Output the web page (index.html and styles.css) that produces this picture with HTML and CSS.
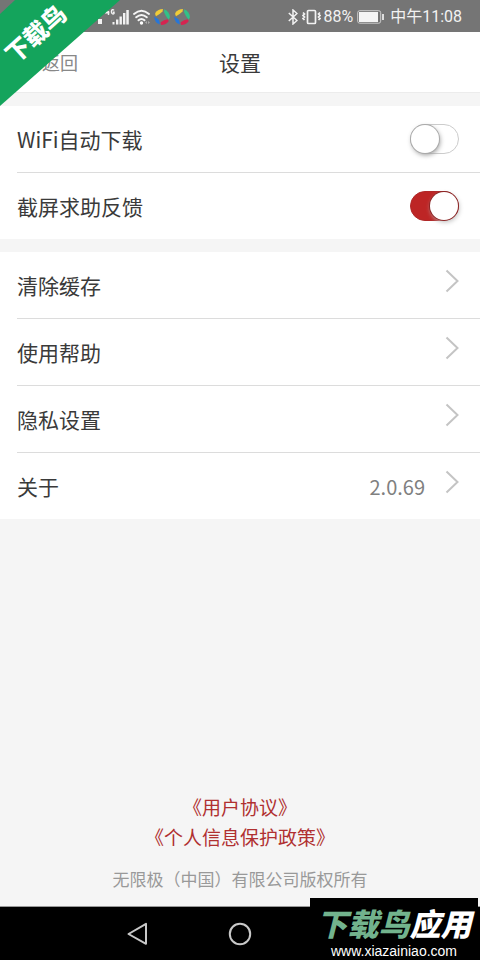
FILE: index.html
```html
<!DOCTYPE html>
<html lang="zh-CN">
<head>
<meta charset="utf-8">
<meta name="viewport" content="width=device-width, initial-scale=1">
<title>设置</title>
<link rel="stylesheet" href="styles.css">
</head>
<body>
<div class="status">
  <div class="status-group status-left">
    <svg width="31" height="18" viewBox="0 0 31 18" aria-hidden="true">
      <g fill="none" stroke="#f2f2f2" stroke-width="1.4">
        <path d="M10 1L8 4.800h3.400M10.500 3v4M16 2.400c-1-1.400-2.600-.8-2.600 1.300s1.600 2.800 2.600 1.800V4.300h-1.200"/>
      </g>
      <g fill="#f2f2f2"><path d="M0 11h4v5H0zM14.500 14h2v2.500h-2zM18 11.500h2.400v5H18zM21.500 8.500h2.400v8h-2.400zM25 5h2.400v11.500H25zM28.300 2h2.500v14.500h-2.500z"/></g>
    </svg>
    <svg width="17" height="16" viewBox="0 0 17 16" aria-hidden="true">
      <g fill="none" stroke="#f5f5f5" stroke-width="1.900" stroke-linecap="round"><path d="M1 5q7.500-6.500 15 0M3.200 8.300q5.300-4.800 10.600 0M5.500 11.300q3-2.800 6 0"/></g>
      <circle cx="8.500" cy="14" r="1.700" fill="#fff"/><path d="M12 13.500l2-1.500v3zM17 13.500L15 12v3z" fill="#aaa"/>
    </svg>
    <svg width="16" height="16" viewBox="0 0 16 16" aria-hidden="true">
      <path d="M1.200 4Q4 .2 9 .1L8.500 2.500Q6 5 2 7.200 1 6 1.200 4z" fill="#f0cc38"/>
      <path d="M10 .3Q15.500 2 15.900 8.500L14.500 10.500Q11.500 7 10.200 3.500z" fill="#32c088"/>
      <path d="M14.800 12Q12 16 7 15.900L6.500 13.500Q10 10.800 13.500 10.300z" fill="#d52450"/>
      <path d="M.1 7.500Q4 9 5.500 12.500l.3 3.100Q.5 13.500.1 7.500z" fill="#2676d9"/>
    </svg>
    <svg width="16" height="16" viewBox="0 0 16 16" aria-hidden="true">
      <path d="M1.200 4Q4 .2 9 .1L8.500 2.500Q6 5 2 7.200 1 6 1.200 4z" fill="#f0cc38"/>
      <path d="M10 .3Q15.500 2 15.900 8.500L14.500 10.500Q11.500 7 10.200 3.500z" fill="#32c088"/>
      <path d="M14.800 12Q12 16 7 15.900L6.500 13.500Q10 10.800 13.500 10.300z" fill="#d52450"/>
      <path d="M.1 7.500Q4 9 5.500 12.500l.3 3.100Q.5 13.500.1 7.500z" fill="#2676d9"/>
    </svg>
  </div>
  <div class="status-group status-right">
    <svg width="10" height="16" viewBox="0 0 10 16" aria-hidden="true"><path d="M.8 4L9 11.500 5 15V1l4 3.500L.8 12" fill="none" stroke="#f2f2f2" stroke-width="1.500"/></svg>
    <svg width="19" height="16" viewBox="0 0 19 16" aria-hidden="true"><g fill="none" stroke="#f2f2f2"><rect x="5.500" y="1.500" width="8" height="13" rx="1" stroke-width="1.700"/><path d="M1 3.500l1.500 1.500L1 6.500 2.500 8 1 9.500 2.500 11M18 3.500L16.500 5 18 6.500 16.500 8 18 9.500 16.500 11" stroke-width="1.700"/></g></svg>
    <span>88%</span>
    <svg class="battery" width="27" height="14" viewBox="0 0 27 14" aria-hidden="true"><rect x=".7" y=".7" width="23" height="12.500" rx="2" fill="none" stroke="#ccc"/><rect x="2" y="2" width="19" height="10" fill="#f5f5f5"/><path d="M25 4h2v6h-2z" fill="#ddd"/></svg>
    <span>中午11:08</span>
  </div>
</div>
<header class="header">
  <a class="back" href="#">返回</a>
  <h1 class="title">设置</h1>
</header>
<main class="main">
  <section class="group">
    <div class="row"><label for="wifi">WiFi自动下载</label><input class="switch" type="checkbox" id="wifi"></div>
    <div class="row"><label for="shot">截屏求助反馈</label><input class="switch" type="checkbox" id="shot" checked></div>
  </section>
  <section class="group">
    <a class="row" href="#"><span>清除缓存</span><svg class="chevron" width="14" height="24" viewBox="0 0 14 24" aria-hidden="true"><path d="M1.500 1.500L12.500 12 1.500 22.500"/></svg></a>
    <a class="row" href="#"><span>使用帮助</span><svg class="chevron" width="14" height="24" viewBox="0 0 14 24" aria-hidden="true"><path d="M1.500 1.500L12.500 12 1.500 22.500"/></svg></a>
    <a class="row" href="#"><span>隐私设置</span><svg class="chevron" width="14" height="24" viewBox="0 0 14 24" aria-hidden="true"><path d="M1.500 1.500L12.500 12 1.500 22.500"/></svg></a>
    <a class="row" href="#"><span>关于</span><span class="version">2.0.69</span><svg class="chevron" width="14" height="24" viewBox="0 0 14 24" aria-hidden="true"><path d="M1.500 1.500L12.500 12 1.500 22.500"/></svg></a>
  </section>
  <footer class="legal">
    <a href="#">《用户协议》</a>
    <a href="#">《个人信息保护政策》</a>
    <p>无限极（中国）有限公司版权所有</p>
  </footer>
</main>
<nav class="nav">
  <button class="key" type="button" aria-label="后退"><svg width="24" height="24" viewBox="0 0 24 24"><path d="M20 1.800v20L2.500 12z"/></svg></button>
  <button class="key" type="button" aria-label="主页"><svg width="24" height="24" viewBox="0 0 24 24"><circle cx="12" cy="12" r="10.200"/></svg></button>
  <div class="mark">
    <div class="mark-name"><span class="mark-green">下载鸟</span>应用</div>
    <div class="mark-url">www.xiazainiao.com</div>
  </div>
</nav>
<div class="ribbon"><span class="ribbon-text">下载鸟</span></div>
</body>
</html>
```
FILE: styles.css
```css
* { box-sizing: border-box; }

body {
  margin: 0;
  min-height: 100vh;
  display: flex;
  flex-direction: column;
  position: relative;
  background: #f5f5f5;
  color: #3a3a3a;
  font-family: "Noto Sans CJK SC", sans-serif;
}

a { color: inherit; text-decoration: none; }
svg { display: block; flex: none; }

.status {
  height: 32px;
  padding: 1px 18px 0 98px;
  display: flex;
  align-items: center;
  justify-content: space-between;
  background: #757575;
  color: #f2f2f2;
  font: 16px/31px Roboto, "Noto Sans CJK SC", sans-serif;
}
.status-group { display: flex; align-items: center; }
.status-left { gap: 4px; }
.status-right { gap: 4px; }
.status-right svg + svg { margin-right: -2px; }
.battery { margin-right: 2px; }

.header {
  height: 61px;
  padding: 0 42px;
  display: grid;
  grid-template-columns: 1fr auto 1fr;
  align-items: center;
  background: #fff;
  border-bottom: 1px solid #ececec;
}
.back { font-size: 18px; color: #888; }
.title { margin: 0; font-size: 21px; font-weight: 400; }

.main { flex: 1; display: flex; flex-direction: column; padding-top: 13px; }
.group { background: #fff; padding-left: 17px; margin-bottom: 13px; }
.row {
  height: 67px;
  padding-right: 21px;
  display: flex;
  align-items: center;
  justify-content: space-between;
  border-bottom: 1px solid #dcdcdc;
  font-size: 21px;
}
.row:last-child { height: 66px; border-bottom: 0; }
.version { margin-left: auto; margin-right: 20px; font-size: 20px; color: #808080; }
.chevron { margin-bottom: 8px; fill: none; stroke: #c4c4c4; stroke-width: 2; }

.switch {
  appearance: none;
  width: 49px;
  height: 30px;
  margin: 0;
  border: 1px solid #ccc;
  border-radius: 15px;
  background: #fff;
  display: flex;
}
.switch::before {
  content: "";
  width: 28px;
  height: 28px;
  border-radius: 50%;
  background: #fff;
  box-shadow: 0 0 0 1px #aaa, 1px 2px 5px #999;
}
.switch:checked { background: #bd2525; border-color: #b02828; justify-content: flex-end; }
.switch:checked::before { box-shadow: 0 0 0 1px #8b2525, 1px 2px 5px #bbb; }

.legal {
  margin-top: auto;
  padding-bottom: 12px;
  display: flex;
  flex-direction: column;
  align-items: center;
  color: #b03030;
  font-size: 19px;
  line-height: 30px;
}
.legal p { margin: 12px 0 0; font-size: 17px; color: #999; }

.nav {
  position: relative;
  height: 54px;
  display: flex;
  align-items: center;
  justify-content: center;
  gap: 78px;
  padding-right: 102px;
  background: #000;
  border-top: 1px solid #999;
}
.key { padding: 0; border: 0; background: none; fill: none; stroke: #c8c8c8; stroke-width: 2; stroke-linejoin: round; }

.mark {
  position: absolute;
  right: 2px;
  bottom: 0;
  width: 168px;
  height: 62px;
  padding-top: 6px;
  background: #000;
  color: #fff;
  text-align: center;
}
.mark-name { font-size: 31px; line-height: 38px; font-weight: 900; font-style: italic; }
.mark-green { color: #72b38d; }
.mark-url { font: 14px/18px "Liberation Sans", sans-serif; }

.ribbon {
  position: absolute;
  top: 0;
  left: 0;
  width: 120px;
  height: 106px;
  background: #14a45c;
  clip-path: polygon(15px 0, 100% 0, 0 100%, 0 14px);
}
.ribbon-text {
  position: absolute;
  top: 17px;
  left: -3px;
  width: 76px;
  color: #fff;
  font-size: 24px;
  line-height: 32px;
  font-weight: 900;
  text-align: center;
  transform: rotate(-42deg);
}
```
